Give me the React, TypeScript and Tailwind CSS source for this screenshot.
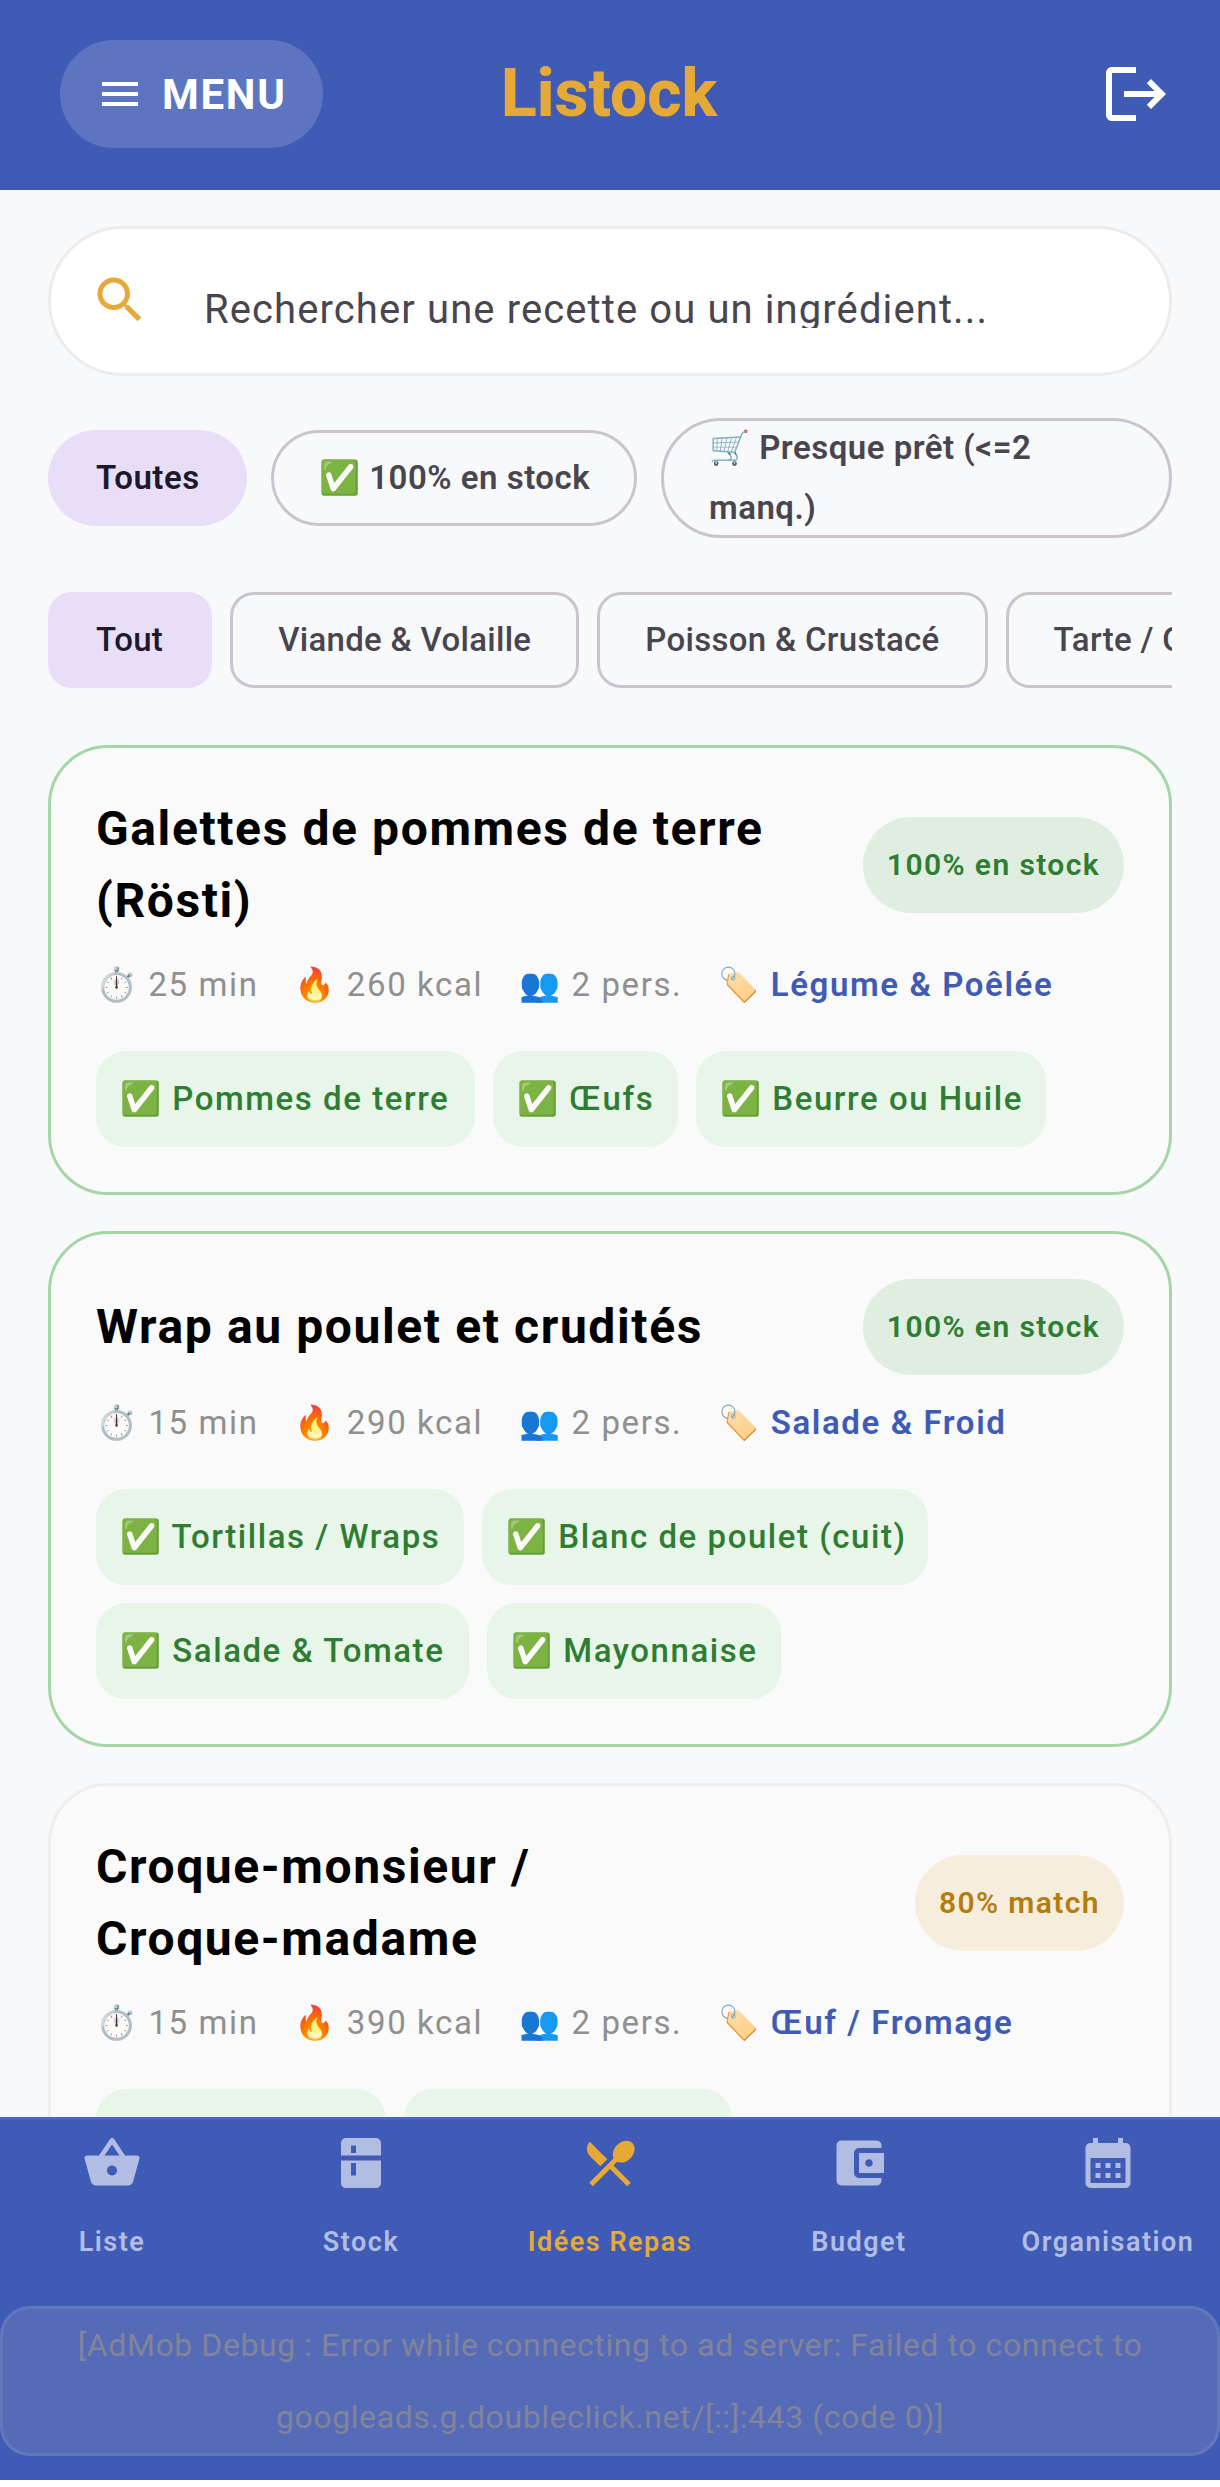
import { MdAccountBalanceWallet, MdCalendarMonth, MdKitchen, MdLogout, MdMenu, MdRestaurantMenu, MdSearch, MdShoppingBasket } from "react-icons/md";

type Recipe = {
  title: string;
  badge: string;
  time: string;
  kcal: string;
  category: string;
  ingredients: { label: string; width: string }[];
  done: boolean;
};

const recipes: Recipe[] = [
  {
    title: "Galettes de pommes de terre (Rösti)",
    badge: "100% en stock",
    time: "25 min",
    kcal: "260 kcal",
    category: "Légume & Poêlée",
    done: true,
    ingredients: [
      { label: "Pommes de terre", width: "w-[379px]" },
      { label: "Œufs", width: "w-[185px]" },
      { label: "Beurre ou Huile", width: "w-[350px]" },
    ],
  },
  {
    title: "Wrap au poulet et crudités",
    badge: "100% en stock",
    time: "15 min",
    kcal: "290 kcal",
    category: "Salade & Froid",
    done: true,
    ingredients: [
      { label: "Tortillas / Wraps", width: "w-[368px]" },
      { label: "Blanc de poulet (cuit)", width: "w-[446px]" },
      { label: "Salade & Tomate", width: "w-[373px]" },
      { label: "Mayonnaise", width: "w-[294px]" },
    ],
  },
  {
    title: "Croque-monsieur /\nCroque-madame",
    badge: "80% match",
    time: "15 min",
    kcal: "390 kcal",
    category: "Œuf / Fromage",
    done: false,
    ingredients: [
      { label: "", width: "w-[290px]" },
      { label: "", width: "w-[328px]" },
    ],
  },
];

const tabs = [
  { label: "Liste", Icon: MdShoppingBasket },
  { label: "Stock", Icon: MdKitchen },
  { label: "Idées Repas", Icon: MdRestaurantMenu, active: true },
  { label: "Budget", Icon: MdAccountBalanceWallet },
  { label: "Organisation", Icon: MdCalendarMonth },
];

function RecipeCard({ recipe }: { recipe: Recipe }) {
  return (
    <article className={`shrink-0 rounded-[60px] border-[3px] bg-[#fafafa] p-[45px] ${recipe.done ? "border-[#a5d6a7]" : "border-[#eeeeee]"}`}>
      <div className="flex items-center justify-between gap-[60px]">
        <h2 className="whitespace-pre-line text-[48px] font-bold leading-[72px] tracking-[1.6px] text-black">{recipe.title}</h2>
        <span className={`flex h-[96px] shrink-0 items-center rounded-full px-[24px] pb-[2px] text-[30px] font-semibold tracking-[1.4px] ${recipe.done ? "bg-[#e0eee1] text-[#2e7d32]" : "bg-[#f7eddc] text-[#b47d0b]"}`}>
          {recipe.badge}
        </span>
      </div>
      <div className="mt-[18px] flex h-[60px] items-center gap-[36px] text-[33px] tracking-[1.6px] text-[#8f8f8f]">
        <span>⏱️ {recipe.time}</span>
        <span>🔥 {recipe.kcal}</span>
        <span>👥 2 pers.</span>
        <span>
          🏷️ <b className="font-semibold text-[#3f5bb5]">{recipe.category}</b>
        </span>
      </div>
      <div className="mt-[36px] flex flex-wrap gap-[18px]">
        {recipe.ingredients.map((item, i) => (
          <span key={i} className={`flex h-[96px] items-center whitespace-nowrap rounded-[30px] bg-[#e8f5e9] pl-[24px] text-[33px] font-medium tracking-[1.55px] text-[#2e7d32] ${item.width}`}>
            {item.label ? `✅ ${item.label}` : ""}
          </span>
        ))}
      </div>
    </article>
  );
}

export default function App() {
  return (
    <div className="flex h-[2487px] w-[1220px] flex-col overflow-hidden bg-white font-['Roboto',sans-serif]">
      <header className="flex h-[190px] shrink-0 bg-[#3f5bb5] pl-[60px] pr-[48px] pt-[40px]">
        <button className="flex h-[108px] w-[263px] items-center rounded-full bg-white/[0.16] pl-[36px] text-[42px] font-bold tracking-[1.7px] text-white">
          <MdMenu className="size-[48px]" />
          <span className="ml-[18px]">MENU</span>
        </button>
        <h1 className="ml-[178px] h-[108px] text-[66px] font-extrabold leading-[108px] text-[#e5a937]">Listock</h1>
        <MdLogout className="ml-auto mt-[18px] size-[72px] text-white" />
      </header>

      <main className="flex min-h-0 flex-1 flex-col overflow-hidden bg-[#f8f9fb] px-[48px] pt-[36px]">
        <div className="flex h-[150px] shrink-0 items-center rounded-[75px] border-[3px] border-[#ececec] bg-white pl-[39px]">
          <MdSearch className="mb-[2px] size-[60px] text-[#e5a937]" />
          <div className="ml-[54px] mt-[17px] h-[36px] overflow-hidden text-[40px] leading-[36px] tracking-[1.1px] text-[#49454f]">Rechercher une recette ou un ingrédient...</div>
        </div>

        <div className="mt-[42px] flex h-[120px] shrink-0 items-center gap-[24px] whitespace-nowrap text-[33px] font-semibold tracking-[0.5px] text-[#49454f]">
          <span className="flex h-[96px] w-[199px] shrink-0 items-center rounded-full bg-[#e8def8] pl-[48px] text-[#1d192b]">Toutes</span>
          <span className="flex h-[96px] w-[366px] shrink-0 items-center rounded-full border-[3px] border-[#cac4d0] pl-[45px]">✅ 100% en stock</span>
          <span className="flex h-[120px] w-[511px] shrink-0 items-center whitespace-normal rounded-[60px] border-[3px] border-[#cac4d0] px-[45px] leading-[60px]">
            <span>🛒 Presque prêt (&lt;=2 manq.)</span>
          </span>
        </div>

        <div className="mt-[54px] flex h-[96px] shrink-0 gap-[18px] overflow-hidden text-[33px] font-medium tracking-[0.3px] text-[#49454f]">
          <span className="flex shrink-0 items-center rounded-[24px] bg-[#e8def8] pl-[48px] pr-[49px] text-[#1d192b]">Tout</span>
          {["Viande & Volaille", "Poisson & Crustacé", "Tarte / Quiche"].map((label) => (
            <span key={label} className="flex shrink-0 items-center rounded-[24px] border-[3px] border-[#cac4d0] px-[45px]">{label}</span>
          ))}
        </div>

        <section className="mt-[57px] flex min-h-0 flex-1 flex-col gap-[36px]">
          {recipes.map((recipe) => (
            <RecipeCard key={recipe.title} recipe={recipe} />
          ))}
        </section>
      </main>

      <footer className="mb-[7px] h-[363px] shrink-0 border-t-[3px] border-[#4c66b8] bg-[#3f5bb5]">
        <nav className="grid grid-cols-[repeat(5,249px)] justify-center pt-[13px]">
          {tabs.map(({ label, Icon, active }) => (
            <div key={label} className={`flex flex-col items-center ${active ? "text-[#e5a937]" : "text-[#b1bde3]"}`}>
              <Icon className="size-[60px]" />
              <span className="mt-[25px] whitespace-nowrap text-[27px] font-semibold leading-[48px] tracking-[1.5px]">{label}</span>
            </div>
          ))}
        </nav>
        <div className="mt-[40px] flex h-[150px] flex-col justify-center rounded-[30px] border-[3px] border-[#6378bc] bg-[#566bb7] text-center text-[32px] leading-[72px] tracking-[0.58px] text-[#82849a]">
          <span>[AdMob Debug : Error while connecting to ad server: Failed to connect to</span>
          <span>googleads.g.doubleclick.net/[::]:443 (code 0)]</span>
        </div>
      </footer>
    </div>
  );
}
